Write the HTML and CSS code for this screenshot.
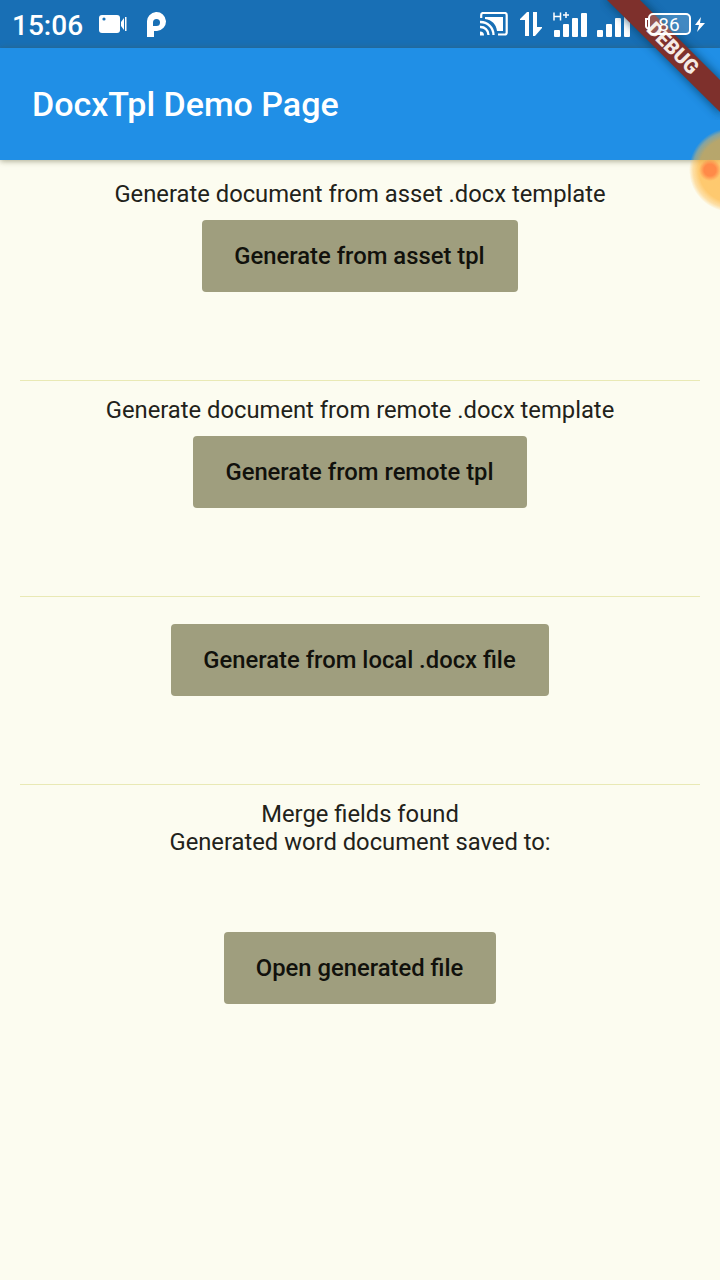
FILE: index.html
```html
<!DOCTYPE html>
<html lang="en">
<head>
<meta charset="utf-8">
<title>DocxTpl Demo Page</title>
<link rel="stylesheet" href="styles.css">
</head>
<body>
<div class="screen">
  <header class="status">
    <span class="clock">15:06</span>
    <svg class="camera" width="30" height="20" viewBox="0 0 30 20"><rect x="0" y="1" width="21" height="18" rx="3" fill="#fff"/><path d="M22 8l3-4v12l-3-4zM26 3h1.500v14H26z" fill="#fff"/><circle cx="5" cy="5" r="1.600" fill="#1872b8"/></svg>
    <svg class="parking" width="20" height="26" viewBox="0 0 20 26"><path fill-rule="evenodd" d="M0 25V10A9.500 9.500 0 1 1 10 19H7v6zM7 14h2.500a3.500 3.500 0 1 0-3.500-3.500V14h1z" fill="#fff"/></svg>
    <span class="space"></span>
    <svg class="cast" width="28" height="24" viewBox="0 0 28 24" fill="none" stroke="#fff"><path d="M1.200 6V3q0-2 2-2h21.500q2 0 2 2v17.500q0 2-2 2H18" stroke-width="2.200"/><path d="M5 5h18v14h-6C16 12 12 8 5 7z" fill="#fff" stroke="none"/><path d="M0 10a13 13 0 0 1 13.500 13M0 15a8 8 0 0 1 8.500 8" stroke-width="2.300"/><path d="M0 19.500a4 4 0 0 1 4 4H0z" fill="#fff" stroke="none"/></svg>
    <svg class="arrows" width="24" height="26" viewBox="0 0 24 26" fill="#fff"><path d="M9 1v24H5V9H0V8L7 1zM13 1h4v15h5v1l-7 8h-2z"/></svg>
    <svg class="signal-h" width="36" height="28" viewBox="0 0 36 28" fill="#fff"><rect x="1" y="20" width="6" height="7" rx="1"/><rect x="10" y="14" width="6" height="13" rx="1"/><rect x="19" y="8" width="6" height="19" rx="1"/><rect x="28" y="3" width="6" height="24" rx="1"/><path d="M1 2.500v8M7.500 2.500v8M1 6.500h6.500M10 5h6M13 2v6" fill="none" stroke="#fff" stroke-width="1.500"/></svg>
    <svg class="signal" width="36" height="28" viewBox="0 0 36 28" fill="#fff"><rect x="1" y="20" width="6" height="7" rx="1"/><rect x="10" y="14" width="6" height="13" rx="1"/><rect x="19" y="8" width="6" height="19" rx="1"/><rect x="28" y="2" width="6" height="25" rx="1"/></svg>
  </header>
  <div class="appbar"><h1>DocxTpl Demo Page</h1></div>
  <main>
    <section class="block">
      <p>Generate document from asset .docx template</p>
      <button class="b1">Generate from asset tpl</button>
    </section>
    <section class="block">
      <p>Generate document from remote .docx template</p>
      <button class="b2">Generate from remote tpl</button>
    </section>
    <section class="block local">
      <button class="b3">Generate from local .docx file</button>
    </section>
    <section class="result">
      <p>Merge fields found</p>
      <p>Generated word document saved to:</p>
      <button class="b4">Open generated file</button>
    </section>
  </main>
  <svg class="banner" width="120" height="120" viewBox="0 0 120 120">
    <defs><filter id="soft" x="-20%" y="-20%" width="140%" height="140%"><feGaussianBlur stdDeviation="5"/></filter></defs>
    <path d="M3-3L123 117V81L39-3z" fill="#053653" opacity=".65" filter="url(#soft)"/>
    <path d="M7 0L120 112V80L40 0z" fill="#7e302c"/>
    <text transform="translate(73 48) rotate(45)" y="7" text-anchor="middle" class="debug">DEBUG</text>
  </svg>
  <svg class="battery" width="62" height="24" viewBox="0 0 62 24"><rect x="5" y="2" width="41" height="20" rx="4" fill="#fff" fill-opacity=".18" stroke="#fff" stroke-width="2"/><path d="M5 7H2v7q0 2 3 3" fill="none" stroke="#fff" stroke-width="2"/><text x="25" y="18.500" text-anchor="middle" class="percent">86</text><path d="M57 5l-6 8h4l-2 7 8-9h-5z" fill="#fff"/></svg>
  <div class="touch"></div>
</div>
</body>
</html>
```
FILE: styles.css
```css
* { box-sizing: border-box; }
body { margin: 0; font-family: Roboto, sans-serif; }
.screen { position: relative; width: 720px; height: 1280px; overflow: hidden; background: #fcfcf0; }
.status { display: flex; align-items: center; height: 48px; padding: 0 88px 0 12px; background: #186fb5; color: #fff; }
.clock { width: 87px; font-size: 28px; font-weight: 500; padding-top: 2px; }
.parking { margin-left: 18px; margin-top: 1px; }
.space { flex: 1; }
.arrows { margin-left: 12px; }
.signal-h { margin-left: 9px; }
.signal { margin-left: 7px; }
.appbar { display: flex; align-items: center; height: 112px; padding-left: 32px; background: #208fe6; color: #fff; box-shadow: 0 1px 6px rgba(80, 80, 40, .5); }
h1 { margin: 0; font-size: 34px; font-weight: 500; line-height: 40px; white-space: nowrap; }
main { padding: 20px 20px 0; }
p { margin: 0; font-size: 23.770px; line-height: 28px; color: #22221a; white-space: nowrap; }
.block, .result { display: flex; flex-direction: column; align-items: center; }
.block { height: 201px; border-bottom: 1px solid #e9e9b5; }
.block + .block { height: 216px; padding-top: 15px; }
.block.local { height: 188px; padding-top: 15px; }
.result { padding-top: 15px; }
button { height: 72px; margin: 12px 0 0; padding: 0 1px 0 0; border: 0; border-radius: 4px; background: #9f9e7e; color: #11110c; font: 500 23.800px Roboto, sans-serif; white-space: nowrap; }
.b1 { width: 316px; }
.b2 { width: 334px; }
.b3 { width: 378px; }
.b4 { width: 272px; margin-top: 76px; }
.banner { position: absolute; top: 0; right: 0; }
.debug { font: 900 20px Roboto, sans-serif; fill: #f5eae4; }
.battery { position: absolute; top: 12px; left: 644px; }
.percent { font: 400 19px Roboto, sans-serif; fill: #fff; }
.touch { position: absolute; top: 128px; left: 689px; width: 84px; height: 84px; border-radius: 50%; background: radial-gradient(circle at 21px 42px, #ff8a48 0 6px, rgba(255, 138, 72, 0) 11px), radial-gradient(circle, rgba(255, 177, 50, .68) 0 32px, rgba(255, 190, 80, .45) 38px, rgba(255, 190, 80, 0) 42px); }
```
